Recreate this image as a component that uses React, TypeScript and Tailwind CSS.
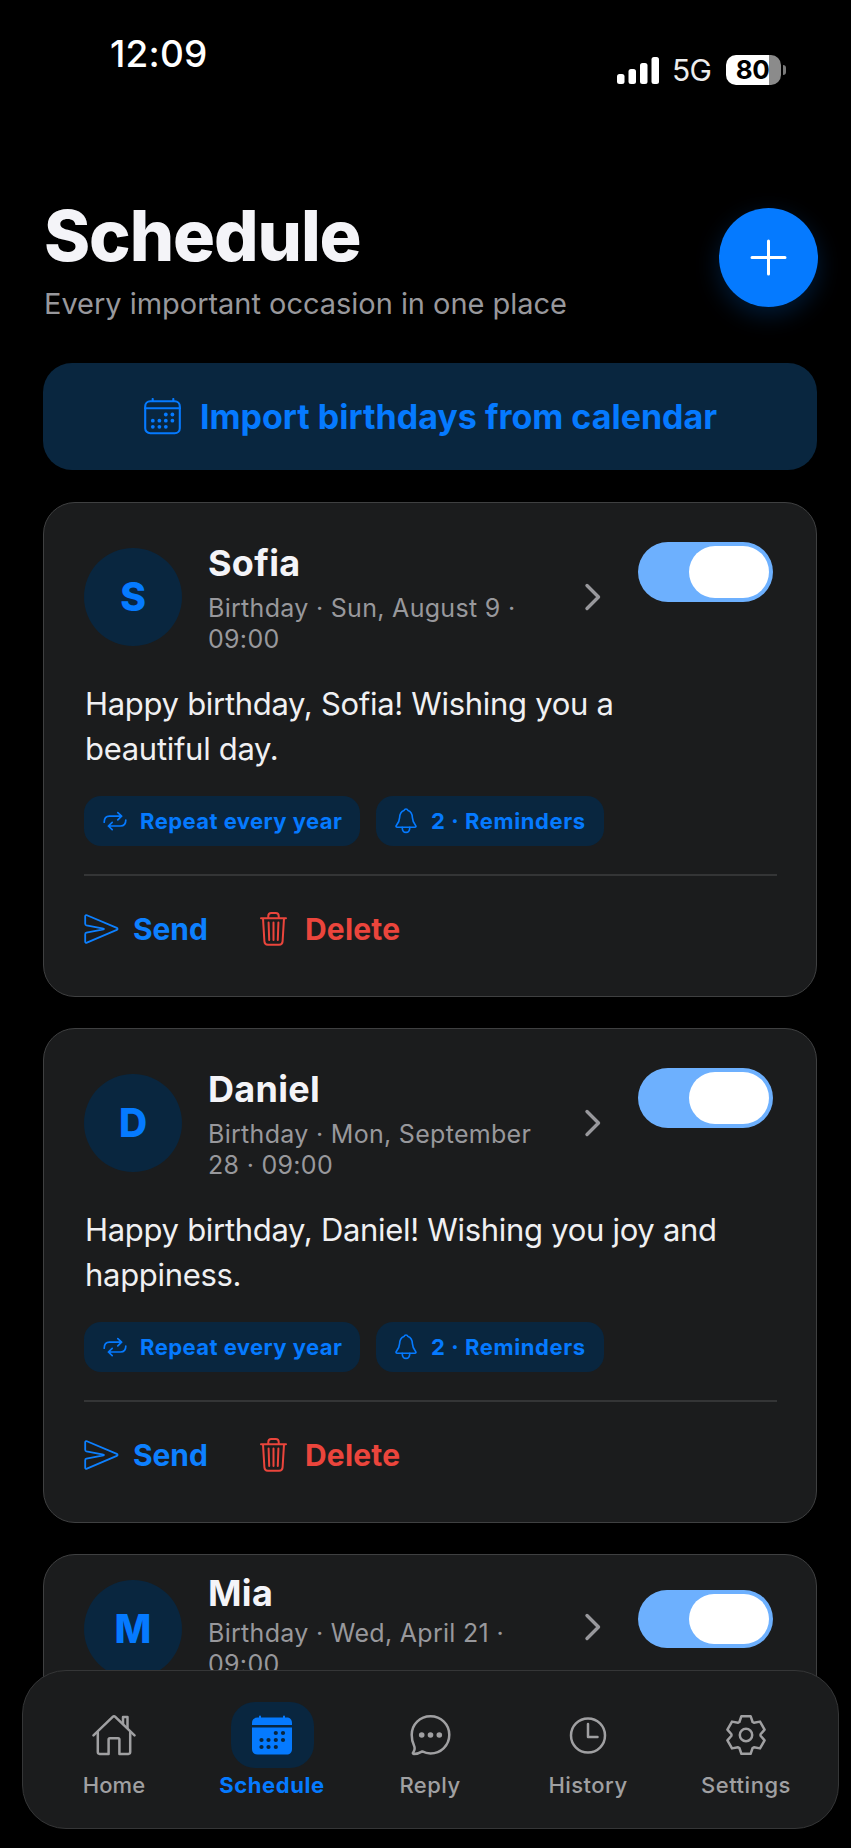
import type { ReactNode } from "react";

function Svg({ w, h, sw = 1.6, children, className = "" }: { w: number; h: number; sw?: number; children: ReactNode; className?: string }) {
  return (
    <svg
      width={w}
      height={h}
      viewBox={`0 0 ${w} ${h}`}
      fill="none"
      stroke="currentColor"
      strokeWidth={sw}
      strokeLinecap="round"
      strokeLinejoin="round"
      className={`block shrink-0 ${className}`}
    >
      {children}
    </svg>
  );
}

function Dots({ points, r, fill }: { points: number[][]; r: number; fill: string }) {
  return (
    <g fill={fill} stroke="none">
      {points.map(([x, y]) => (
        <circle key={`${x}-${y}`} cx={x} cy={y} r={r} />
      ))}
    </g>
  );
}

const CalendarOutline = () => (
  <Svg w={37} h={37} sw={2.1}>
    <rect x="1.2" y="3.2" width="34.6" height="32" rx="5" />
    <path d="M1 10.2h35M8.7 1v2M29.3 1v2" />
    <Dots
      r={1.9}
      fill="currentColor"
      points={[[21.8, 16.5], [28.4, 16.5], [8.8, 22.7], [15.4, 22.7], [21.8, 22.7], [28.4, 22.7], [8.8, 28.8], [15.4, 28.8], [21.8, 28.8]]}
    />
  </Svg>
);

const RepeatIcon = () => (
  <Svg w={24} h={20} sw={1.7}>
    <path d="M1.2 11.2C1.2 7 3 5.2 6.5 5.2H18.6M14.8 1.6l3.8 3.6-3.8 3.6" />
    <path d="M22.8 9C22.8 13.2 21 15 17.5 15H5.4M9.2 11.4l-3.8 3.6 3.8 3.6" />
  </Svg>
);

const BellIcon = () => (
  <Svg w={22} h={26} sw={1.6}>
    <path d="M2.2 19.2c-1.2 0-1.5-1-.8-1.800 1.900-2.200 3-3.600 3.200-7.800C4.800 5.500 6.500 3.300 9 2.500c.4-1 1.100-1.500 2-1.500s1.600.5 2 1.500c2.500.8 4.200 3 4.400 7.100.2 4.200 1.300 5.600 3.200 7.800.7.800.4 1.800-.8 1.800z" />
    <path d="M7.200 19.400c.1 3.200 1.600 5 3.800 5s3.700-1.800 3.800-5" />
  </Svg>
);

const SendIcon = () => (
  <Svg w={35} h={30} sw={1.8}>
    <path d="M1.200 2.300c0-1 .8-1.400 1.700-1L32.800 13.900c1 .4 1 1.600 0 2L2.900 28.700c-.9.400-1.700 0-1.700-1V20.200c0-1 .3-1.300 1.200-1.500L19.500 15.400c.6-.1.600-.7 0-.8L2.400 11.300c-.9-.2-1.200-.5-1.200-1.500z" />
  </Svg>
);

const TrashIcon = () => (
  <Svg w={27} h={34} sw={2}>
    <path d="M1 6.200h25M8.300 6V4c0-2 1-3 3-3h4.400c2 0 3 1 3 3v2M3 6.400l1.400 22.800c.1 2.300 1.300 3.500 3.500 3.500h11.200c2.200 0 3.400-1.200 3.500-3.500L24 6.400M8.600 10.500l.6 17.500M13.500 10.500V28M18.400 10.500l-.6 17.500" />
  </Svg>
);

const HomeIcon = () => (
  <Svg w={44} h={42} sw={2.5}>
    <path d="M1.500 21.300 20.700 2.900c.8-.8 1.800-.8 2.600 0L42.500 21.300" />
    <path d="M31 9.800V3h4.500v11M5.800 18.500v19.600c0 1.200.6 1.800 1.800 1.800h9V25.600c0-.9.400-1.300 1.300-1.300h8.200c.9 0 1.300.4 1.300 1.300v14.300h9c1.200 0 1.800-.6 1.800-1.800V18.500" />
  </Svg>
);

const CalendarFilled = () => (
  <Svg w={40} h={40} sw={2}>
    <path d="M8 1.500v3M32 1.500v3" />
    <path fill="currentColor" stroke="none" d="M0 10V8c0-3.500 2-5.500 5.500-5.500h29C38 2.500 40 4.500 40 8v2zM0 12.500h40V34c0 3.500-2 5.500-5.500 5.500h-29C2 39.500 0 37.500 0 34z" />
    <Dots
      r={2.1}
      fill="#09263f"
      points={[[23.8, 18], [31, 18], [9.5, 25], [16.5, 25], [23.8, 25], [31, 25], [9.5, 32], [16.5, 32], [23.8, 32]]}
    />
  </Svg>
);

const ReplyIcon = () => (
  <Svg w={42} h={42} sw={2.5}>
    <path d="M21.500 2.200C32 2.200 40.300 10.300 40.300 20.800S32 39.400 21.500 39.400c-3.100 0-5.700-.7-8.200-2-2.300 1.500-5.500 2.500-8.600 2.500-.8 0-1.100-.7-.6-1.300 1.500-1.900 2-4.700.8-7.300-1.500-3.200-2.200-6.700-2.200-10.500C2.700 10.300 11 2.200 21.500 2.200z" />
    <Dots r={2.8} fill="currentColor" points={[[12.7, 21], [21.5, 21], [30.3, 21]]} />
  </Svg>
);

const HistoryIcon = () => (
  <Svg w={38} h={38} sw={2.5}>
    <circle cx="19" cy="19.5" r="17" />
    <path d="M19 8V21h9.500" />
  </Svg>
);

const toothProfile = [[-6.6, -13], [-4.6, -18.8], [4.6, -18.8], [6.6, -13]];
const gearPoints = [0, 60, 120, 180, 240, 300]
  .flatMap((deg) => {
    const a = (deg * Math.PI) / 180;
    return toothProfile.map(([x, y]) => `${(21 + x * Math.cos(a) - y * Math.sin(a)).toFixed(2)},${(21 + x * Math.sin(a) + y * Math.cos(a)).toFixed(2)}`);
  })
  .join(" ");

const SettingsIcon = () => (
  <Svg w={42} h={42} sw={2.5}>
    <circle cx="21" cy="21" r="6.2" />
    <polygon points={gearPoints} />
  </Svg>
);

function StatusBar() {
  return (
    <div className="flex h-[200px] shrink-0 items-start justify-between pr-[65px] pl-[110px]">
      <span className="mt-[34px] text-[37px] leading-[40px] font-medium tracking-[0.2px] text-white">12:09</span>
      <div className="mt-[55px] flex h-[30px] items-center">
        <svg width="43" height="27" viewBox="0 0 43 27" fill="#fff" className="block">
          <rect x="0" y="17" width="7.5" height="10" rx="2.5" />
          <rect x="11.5" y="12" width="7.5" height="15" rx="2.5" />
          <rect x="23" y="6" width="7.5" height="21" rx="2.5" />
          <rect x="34.5" y="0" width="7.5" height="27" rx="2.5" />
        </svg>
        <span className="ml-[12px] w-[41px] text-[30px] leading-[32px] font-normal tracking-[-0.8px] text-[#ededed]">5G</span>
        <div className="ml-[13px] flex h-[30px] w-[55px] items-center justify-center rounded-[10px] bg-[linear-gradient(90deg,#fff_79%,#8b8b8b_79%)] pr-[2px] text-[26px] leading-[30px] font-bold tracking-[-0.5px] text-black">
          80
        </div>
        <div className="ml-[2px] h-[10px] w-[3px] rounded-r-full bg-[#7a7a7a]" />
      </div>
    </div>
  );
}

function Toggle({ className }: { className: string }) {
  return (
    <div className={`flex w-[135px] shrink-0 items-center justify-end rounded-full bg-[#6db0fe] p-[4px] ${className}`}>
      <div className="h-full w-[80px] rounded-full bg-white" />
    </div>
  );
}

function Chip({ icon, label, className }: { icon: ReactNode; label: string; className: string }) {
  return (
    <div className={`flex h-[50px] items-center rounded-[17px] bg-[#09263f] text-[22px] leading-[28px] font-bold text-[#057aff] ${className}`}>
      {icon}
      <span className="whitespace-nowrap">{label}</span>
    </div>
  );
}

type Entry = { name: string; when: string[]; message: string[]; compact?: boolean };

const entries: Entry[] = [
  { name: "Sofia", when: ["Birthday · Sun, August 9 ·", "09:00"], message: ["Happy birthday, Sofia! Wishing you a", "beautiful day."] },
  { name: "Daniel", when: ["Birthday · Mon, September", "28 · 09:00"], message: ["Happy birthday, Daniel! Wishing you joy and", "happiness."] },
  { name: "Mia", when: ["Birthday · Wed, April 21 ·", "09:00"], message: [], compact: true },
];

function Lines({ lines }: { lines: string[] }) {
  return (
    <>
      {lines.map((line) => (
        <span key={line} className="block whitespace-nowrap">
          {line}
        </span>
      ))}
    </>
  );
}

function Card({ entry }: { entry: Entry }) {
  const { name, when, message, compact } = entry;
  return (
    <section className={`flex shrink-0 flex-col rounded-[32px] border border-[#3f4041] bg-[#1b1c1d] pr-[38px] pl-[40px] ${compact ? "h-[200px] pt-[17px]" : "h-[495px] pt-[39px]"}`}>
      <div className="flex h-[140px] shrink-0 items-start">
        <div className={`flex size-[98px] shrink-0 items-center justify-center rounded-full bg-[#09263f] text-[39px] font-extrabold text-[#057aff] ${compact ? "mt-[8px]" : "mt-[6px]"}`}>
          {name[0]}
        </div>
        <div className="ml-[26px] w-[376px]">
          <h2 className="text-[36px] leading-[42px] font-bold tracking-[0.3px] text-[#f4f4f8]">{name}</h2>
          <p className={`text-[25px] leading-[31px] font-normal tracking-[0.3px] text-[#98989c] ${compact ? "mt-[4px]" : "mt-[9px]"}`}>
            <Lines lines={when} />
          </p>
        </div>
        <Svg w={18} h={30} sw={3.4} className="mt-[40px]">
          <path d="M3 3.500 14.500 15 3 26.500" stroke="#98989c" />
        </Svg>
        <Toggle className={compact ? "mt-[18px] ml-[36px] h-[58px]" : "ml-[36px] h-[60px]"} />
      </div>
      {!compact && (
        <>
          <p className="ml-px text-[31px] leading-[44.5px] font-normal tracking-[-0.3px] text-[#f0f0f2]">
            <Lines lines={message} />
          </p>
          <div className="mt-[25px] flex gap-[16px]">
            <Chip icon={<RepeatIcon />} label="Repeat every year" className="w-[276px] gap-[13px] pl-[19px] tracking-[0.45px]" />
            <Chip icon={<BellIcon />} label="2 · Reminders" className="w-[228px] gap-[14px] pl-[19px] tracking-[0.6px]" />
          </div>
          <div className="mt-[28px] h-[2px] w-[693px] bg-[#343536]" />
          <div className="mt-[33px] flex h-[40px] items-center text-[30px] leading-[40px] font-bold">
            <span className="flex w-[176px] items-center gap-[14px] tracking-[-0.1px] text-[#0d80ff]">
              <SendIcon />
              Send
            </span>
            <span className="flex items-center gap-[18px] tracking-[0.2px] text-[#eb453c]">
              <TrashIcon />
              Delete
            </span>
          </div>
        </>
      )}
    </section>
  );
}

const tabs = [
  { label: "Home", icon: <HomeIcon />, labelClass: "font-medium tracking-[0.1px]" },
  { label: "Schedule", icon: <CalendarFilled />, labelClass: "font-bold tracking-[0.6px]", active: true },
  { label: "Reply", icon: <ReplyIcon />, labelClass: "font-medium tracking-[0.45px]" },
  { label: "History", icon: <HistoryIcon />, labelClass: "font-medium tracking-[0.45px]" },
  { label: "Settings", icon: <SettingsIcon />, labelClass: "font-medium tracking-[0.5px]" },
];

function TabBar() {
  return (
    <nav className="absolute top-[1670px] left-[22px] flex h-[159px] w-[817px] rounded-[44px] border border-[#353637] bg-[#1b1c1d] pt-[31px] pr-[13px] pl-[12px]">
      {tabs.map((tab) => (
        <div key={tab.label} className={`flex flex-1 flex-col items-center ${tab.active ? "text-[#057aff]" : "text-[#a0a0a2]"}`}>
          <div className={`flex h-[66px] w-[83px] items-center justify-center rounded-[24px] ${tab.active ? "bg-[#09263f]" : ""}`}>{tab.icon}</div>
          <span className={`mt-[3px] text-[22px] leading-[28px] ${tab.labelClass}`}>{tab.label}</span>
        </div>
      ))}
    </nav>
  );
}

export default function App() {
  return (
    <main className="relative flex h-[1848px] w-[851px] flex-col overflow-hidden bg-black font-['Inter',sans-serif]">
      <StatusBar />
      <header className="flex h-[163px] shrink-0 items-start justify-between pr-[33px] pl-[44px]">
        <div>
          <h1 className="text-[70px] leading-[71px] font-extrabold tracking-[-1.1px] text-[#f4f4f8]">Schedule</h1>
          <p className="mt-[15px] text-[29px] leading-[36px] font-normal tracking-[-0.03px] text-[#98989c]">Every important occasion in one place</p>
        </div>
        <div className="mt-[8px] flex size-[99px] items-center justify-center rounded-full bg-[#057aff] text-white shadow-[0_8px_24px_rgba(5,122,255,0.22)]">
          <Svg w={37} h={37} sw={3}>
            <path d="M18.500 2v33M2 18.500h33" />
          </Svg>
        </div>
      </header>
      <div className="mr-[34px] ml-[43px] flex h-[107px] shrink-0 items-center rounded-[29px] bg-[#09263f] pl-[101px] text-[34px] font-bold text-[#057aff]">
        <CalendarOutline />
        <span className="ml-[19px] whitespace-nowrap">Import birthdays from calendar</span>
      </div>
      <div className="mt-[32px] mr-[34px] ml-[43px] flex flex-col gap-[31px]">
        {entries.map((entry) => (
          <Card key={entry.name} entry={entry} />
        ))}
      </div>
      <TabBar />
    </main>
  );
}
